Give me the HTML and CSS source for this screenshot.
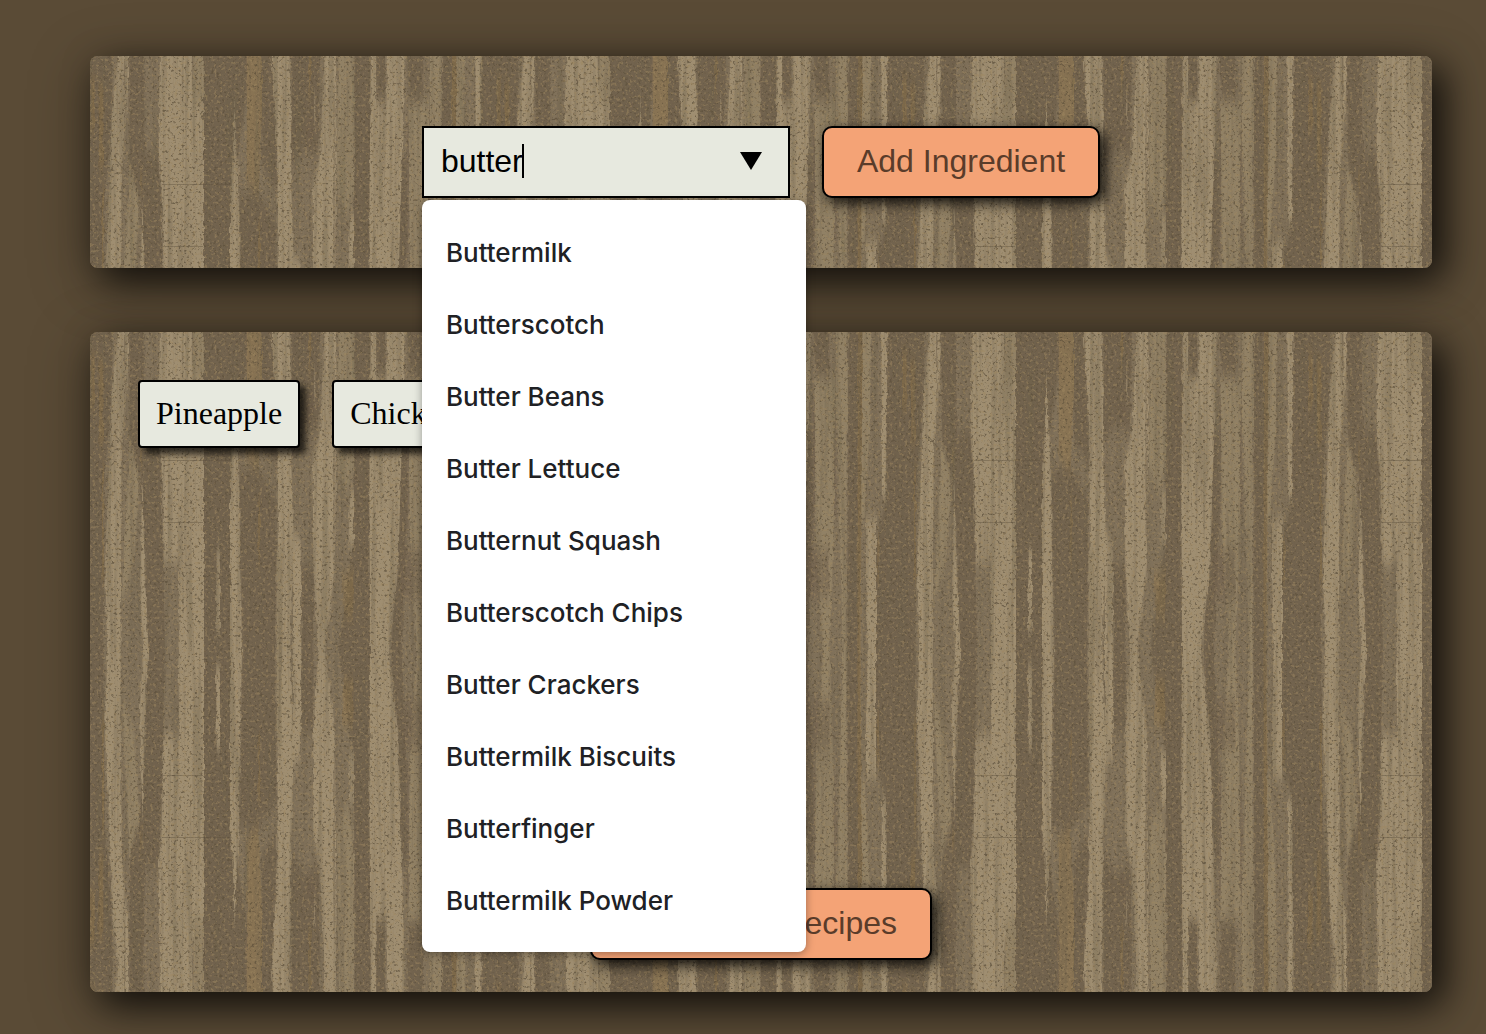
FILE: index.html
```
<!DOCTYPE html>
<html lang="en">
<head>
<meta charset="utf-8">
<meta name="viewport" content="width=device-width, initial-scale=1">
<title>Ingredients</title>
<link rel="stylesheet" href="styles.css">
</head>
<body>
<svg class="defs" aria-hidden="true">
  <defs>
    <filter id="rough" x="0" y="0" width="100%" height="100%" color-interpolation-filters="sRGB">
      <feTurbulence type="fractalNoise" baseFrequency="0.4 0.1" numOctaves="2" seed="4" result="n"/>
      <feGaussianBlur in="SourceGraphic" stdDeviation="0.4 7" result="b"/>
      <feDisplacementMap in="b" in2="n" scale="4" xChannelSelector="R" yChannelSelector="G"/>
    </filter>
    <filter id="fibres" x="0" y="0" width="100%" height="100%" color-interpolation-filters="sRGB">
      <feTurbulence type="fractalNoise" baseFrequency="0.18 0.006" numOctaves="3" seed="11"/>
      <feColorMatrix values="0 0 0 0 0.43  0 0 0 0 0.38  0 0 0 0 0.30  4 0 0 0 -1.8"/>
    </filter>
    <filter id="specks" x="0" y="0" width="100%" height="100%" color-interpolation-filters="sRGB">
      <feTurbulence type="fractalNoise" baseFrequency="0.37" numOctaves="3" seed="7"/>
      <feColorMatrix values="0 0 0 0 0.36  0 0 0 0 0.31  0 0 0 0 0.23  5 0 0 0 -2.8"/>
    </filter>
    <filter id="grains" x="0" y="0" width="100%" height="100%" color-interpolation-filters="sRGB">
      <feTurbulence type="fractalNoise" baseFrequency="0.33" numOctaves="3" seed="23"/>
      <feColorMatrix values="0 0 0 0 0.62  0 0 0 0 0.53  0 0 0 0 0.38  0 5 0 0 -2.7"/>
    </filter>
    <!-- Half a tile of planks; its mirror image completes the tile. -->
    <g id="planks">
      <path fill="#80715a" d="M0 0H1218V951H0z"/>
      <g fill="#72634e">
        <path d="M0 0H70L60 260 45 420 40 951H0zM118 0H160L165 300 205 290 215 500 225 951H172L165 600 140 420 120 330zM342 0H470V120L440 330 420 420V951H342z"/>
        <path d="M450 420L500 400 560 500 555 951H458zM515 0H545L555 200 560 400 515 330z"/>
        <path d="M605 0H690L685 300 640 280 605 330zM794 0H848L840 951H745L790 630zM950 0H1000V130H960zM930 300H950V600L935 951H905zM1057 0H1100L1090 951H1055zM1176 0H1218V951H1140V620L1170 500zM635 700H670V951H635zM860 0H885V130H860z"/>
      </g>
      <g fill="#9f8e71">
        <path d="M85 0H118L112 150 95 330 92 951H52L45 700 58 400 68 130zM157 430L163 700 175 951H160L150 780zM210 0H305L310 110 342 140V951H265L268 680 240 700 222 690 215 400 205 290z"/>
        <path d="M434 120L440 310 446 320 446 410 450 700 456 951H420V420L428 310zM545 0H598L602 120 604 400 612 620 600 951H565L562 300z"/>
        <path d="M609 600L632 620 634 951H609zM703 0H738L740 140 735 700 705 951H685L670 700 668 400 690 300 698 130zM842 0H858V140H890V0H944L935 340 925 700 895 951H840L838 480z"/>
        <path d="M1156 0H1174L1170 500H1158zM673 100L678 200H673zM1110 560H1140V951H1115L1110 700zM780 480H792V640H775zM380 650H390V900H378z"/>
      </g>
      <g fill="#918165">
        <path d="M745 0H793V390L770 480 740 400zM955 140H1018L1012 640 1000 951H980L960 620zM1020 0H1055V300H1020zM1025 300H1052V951H1040zM118 330L150 440 130 700 95 800zM1100 0H1125L1120 300 1105 560H1095zM310 0H342V140H310zM560 650H575V951H560z"/>
      </g>
      <g fill="#6f604b" opacity=".5">
        <path d="M938 650H1000V800H930zM102 0H106V220H102zM950 200H956V600H950zM1014 200H1019V560H1014zM730 120H734V620H730zM650 200H670V260H650z"/>
      </g>
      <g fill="#a07c3e" opacity=".25">
        <path d="M0 60H14V230H0zM25 80H40V340H28zM36 400H42V750H36zM470 0H516V170L505 420 470 380zM150 350H157V400H150zM657 0H663V110H657zM1086 0H1099L1094 951H1084zM1144 600H1149V760H1144zM755 720H790V860H760zM505 500H510V700H505z"/>
      </g>
    </g>
    <path id="cracks" fill="#5f523f" opacity=".45" d="M72 128H113V129H72zM113 128H140V129H113zM73 190H113V191H73zM26 103L38 117 37 118 25 104z"/>
    <pattern id="wood" width="406" height="634" patternUnits="userSpaceOnUse">
      <g filter="url(#rough)">
        <use href="#planks" transform="scale(.33333 -.33333)"/>
        <use href="#planks" transform="translate(0 634) scale(.33333)"/>
        <use href="#planks" transform="translate(-406 0) scale(.33333)"/>
        <use href="#planks" transform="translate(406 0) scale(.33333)"/>
        <use href="#planks" transform="translate(-406 634) scale(.33333 -.33333)"/>
        <use href="#planks" transform="translate(406 634) scale(.33333 -.33333)"/>
        <use href="#planks" transform="scale(.33333)"/>
        <use href="#planks" transform="translate(0 634) scale(.33333 -.33333)"/>
      </g>
      <use href="#cracks"/>
      <use href="#cracks" transform="translate(0 634) scale(1 -1)"/>
    </pattern>
  </defs>
</svg>

<main class="page">
  <section class="panel entry">
    <svg class="grain" aria-hidden="true">
      <rect width="100%" height="100%" fill="url(#wood)"/>
      <rect width="100%" height="100%" filter="url(#fibres)" opacity=".35"/>
      <rect width="100%" height="100%" filter="url(#specks)" opacity=".7"/>
      <rect width="100%" height="100%" filter="url(#grains)" opacity=".5"/>
    </svg>
    <form class="entry-form">
      <div class="combo">
        <input class="combo-input" type="text" value="butter" aria-label="Ingredient" autocomplete="off">
        <span class="caret"></span>
        <svg class="arrow" viewBox="0 0 22 18" aria-hidden="true"><path d="M0 0H22L11 18z"/></svg>
        <ul class="options">
          <li>Buttermilk</li>
          <li>Butterscotch</li>
          <li>Butter Beans</li>
          <li>Butter Lettuce</li>
          <li>Butternut Squash</li>
          <li>Butterscotch Chips</li>
          <li>Butter Crackers</li>
          <li>Buttermilk Biscuits</li>
          <li>Butterfinger</li>
          <li>Buttermilk Powder</li>
        </ul>
      </div>
      <button class="btn" type="button">Add Ingredient</button>
    </form>
  </section>

  <section class="panel pantry">
    <svg class="grain" aria-hidden="true">
      <rect width="100%" height="100%" fill="url(#wood)"/>
      <rect width="100%" height="100%" filter="url(#fibres)" opacity=".35"/>
      <rect width="100%" height="100%" filter="url(#specks)" opacity=".7"/>
      <rect width="100%" height="100%" filter="url(#grains)" opacity=".5"/>
    </svg>
    <div class="tags">
      <span class="tag">Pineapple</span>
      <span class="tag">Chicken</span>
    </div>
    <button class="btn" type="button">Search for Recipes</button>
  </section>
</main>
</body>
</html>
```
FILE: styles.css
```
* {
  box-sizing: border-box;
}

body {
  margin: 0;
  background: #5a4b36;
  color: #000;
  font-family: "Liberation Serif", "Times New Roman", serif;
  font-size: 32px;
}

.defs {
  position: absolute;
  width: 0;
  height: 0;
}

.page {
  display: flex;
  flex-direction: column;
  gap: 64px;
  min-height: 100vh;
  padding: 56px 54px 42px 90px;
}

.panel {
  position: relative;
  border-radius: 8px;
  background: #85765c;
  box-shadow: 12px 12px 36px rgba(0, 0, 0, 0.7), 0 12px 60px rgba(0, 0, 0, 0.35);
}

.grain {
  position: absolute;
  inset: 0;
  width: 100%;
  height: 100%;
  border-radius: 8px;
}

.entry {
  z-index: 1;
  padding: 70px 32px;
}

.entry-form {
  position: relative;
  display: flex;
  justify-content: center;
  gap: 32px;
}

.combo {
  position: relative;
  width: 368px;
}

.combo-input {
  display: block;
  width: 100%;
  height: 72px;
  padding: 0 64px 2px 17px;
  border: 2px solid #000;
  border-radius: 0;
  outline: none;
  background: #e7e9df;
  color: #000;
  font: 32px "Liberation Sans", Arial, sans-serif;
}

.caret {
  position: absolute;
  top: 18px;
  left: 100px;
  width: 2px;
  height: 34px;
  background: #000;
}

.arrow {
  position: absolute;
  top: 26px;
  right: 28px;
  width: 22px;
  height: 18px;
}

.options {
  position: absolute;
  top: 74px;
  left: 0;
  width: 384px;
  margin: 0;
  padding: 17px 0 15px;
  border-radius: 8px;
  background: #fff;
  box-shadow: 0 2px 8px rgba(0, 0, 0, 0.35);
  color: #202124;
  font: 500 26px/72px Inter, sans-serif;
  font-variant-ligatures: none;
  list-style: none;
}

.options li {
  height: 72px;
  padding: 0 24px;
  white-space: nowrap;
}

.btn {
  position: relative;
  height: 72px;
  padding: 0 33px 2px;
  border: 2px solid #000;
  border-radius: 10px;
  background: #f4a376;
  box-shadow: 5px 5px 14px rgba(0, 0, 0, 0.9);
  color: #5a3c2a;
  font: 32px "Liberation Sans", Arial, sans-serif;
}

.pantry {
  display: flex;
  flex: 1;
  flex-direction: column;
  align-items: center;
  justify-content: space-between;
  padding: 48px 48px 32px;
}

.tags {
  position: relative;
  display: flex;
  flex-wrap: wrap;
  align-self: stretch;
  gap: 32px;
}

.tag {
  padding: 13px 16px 15px;
  border: 2px solid #000;
  border-radius: 4px;
  background: #e7e9df;
  box-shadow: 6px 6px 6px rgba(0, 0, 0, 0.7);
  line-height: 36px;
}
```
